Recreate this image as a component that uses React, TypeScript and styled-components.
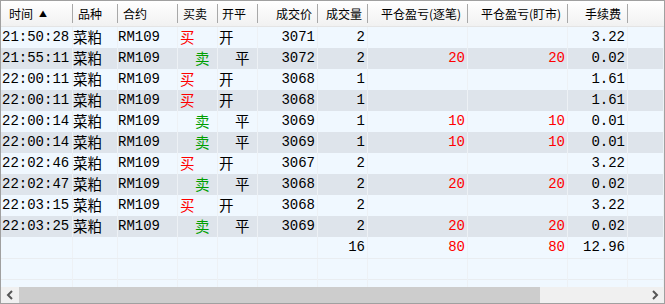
import React from "react";
import styled, { createGlobalStyle } from "styled-components";

const Global = createGlobalStyle`
  html, body { margin: 0; padding: 0; background: #fff; }
  body { width: 665px; height: 304px; overflow: hidden; }
`;

const COLS = "72px 45px 60px 40px 40px 60px 50px 100px 100px 60px 36px";

const Frame = styled.div`
  width: 665px;
  height: 304px;
  box-sizing: border-box;
  border: 1px solid #a0a0a0;
  background: #f0f8ff;
  display: flex;
  flex-direction: column;
  overflow: hidden;
`;

const HeaderRow = styled.div`
  display: grid;
  grid-template-columns: ${COLS};
  height: 25px;
  flex: none;
  background: linear-gradient(#ffffff, #f1f1f1);
  border-bottom: 1px solid #e4e4e4;
  font-family: "Noto Sans CJK SC", "Noto Sans", sans-serif;
  font-size: 12px;
  color: #000;
`;

const HeadCell = styled.div<{ $right?: boolean; $pad?: number }>`
  position: relative;
  display: flex;
  align-items: center;
  justify-content: ${(p) => (p.$right ? "flex-end" : "flex-start")};
  padding: ${(p) => (p.$right ? `0 ${p.$pad ?? 6}px 0 0` : `0 0 0 ${p.$pad ?? 6}px`)};
  white-space: nowrap;
  &::after {
    content: "";
    position: absolute;
    right: 0;
    top: 3px;
    bottom: 3px;
    width: 1px;
    background: #a8a8a8;
  }
`;

const HeadFill = styled.div``;

const Arrow = styled.span`
  font-size: 8px;
  margin-left: 6px;
  margin-top: -1px;
`;

const Body = styled.div`
  flex: 1;
  overflow: hidden;
`;

const Row = styled.div<{ $alt?: boolean }>`
  display: grid;
  grid-template-columns: ${COLS};
  height: 21px;
  background: ${(p) => (p.$alt ? "#dee4eb" : "#f0f8ff")};
  font-family: "Liberation Mono", "Noto Sans CJK SC", monospace;
  font-size: 14px;
  line-height: 21px;
  color: #000;
`;

const EmptyRow = styled(Row)`
  box-sizing: border-box;
  border-top: 1px solid #e9edf1;
`;

const Cell = styled.div<{ $right?: boolean; $pad?: number; $color?: string }>`
  box-sizing: border-box;
  height: 21px;
  line-height: 21px;
  border-right: 1px solid #edf1f5;
  text-align: ${(p) => (p.$right ? "right" : "left")};
  padding: ${(p) => (p.$right ? `0 ${p.$pad ?? 2}px 0 0` : `0 0 0 ${p.$pad ?? 1}px`)};
  color: ${(p) => p.$color ?? "#000"};
  white-space: nowrap;
  overflow: hidden;
`;

const CJK = styled.span`
  display: inline-block;
  vertical-align: top;
  height: 21px;
  line-height: 20px;
  font-family: "Noto Sans CJK SC", sans-serif;
  font-size: 14.5px;
`;

const Scrollbar = styled.div`
  flex: none;
  height: 16px;
  display: flex;
  background: #f0f0f0;
`;

const ScrollBtn = styled.div`
  width: 18px;
  display: flex;
  align-items: center;
  justify-content: center;
  flex: none;
`;

const Track = styled.div`
  flex: 1;
  display: flex;
`;

const Thumb = styled.div`
  width: 521px;
  background: #cdcdcd;
`;

type Trade = {
  t: string;
  side: "买" | "卖";
  oc: "开" | "平";
  price: number;
  qty: number;
  p1?: number;
  p2?: number;
  fee: string;
};

const trades: Trade[] = [
  { t: "21:50:28", side: "买", oc: "开", price: 3071, qty: 2, fee: "3.22" },
  { t: "21:55:11", side: "卖", oc: "平", price: 3072, qty: 2, p1: 20, p2: 20, fee: "0.02" },
  { t: "22:00:11", side: "买", oc: "开", price: 3068, qty: 1, fee: "1.61" },
  { t: "22:00:11", side: "买", oc: "开", price: 3068, qty: 1, fee: "1.61" },
  { t: "22:00:14", side: "卖", oc: "平", price: 3069, qty: 1, p1: 10, p2: 10, fee: "0.01" },
  { t: "22:00:14", side: "卖", oc: "平", price: 3069, qty: 1, p1: 10, p2: 10, fee: "0.01" },
  { t: "22:02:46", side: "买", oc: "开", price: 3067, qty: 2, fee: "3.22" },
  { t: "22:02:47", side: "卖", oc: "平", price: 3068, qty: 2, p1: 20, p2: 20, fee: "0.02" },
  { t: "22:03:15", side: "买", oc: "开", price: 3068, qty: 2, fee: "3.22" },
  { t: "22:03:25", side: "卖", oc: "平", price: 3069, qty: 2, p1: 20, p2: 20, fee: "0.02" },
];

const RED = "#ff0000";
const GREEN = "#009e00";

const headers: { label: string; right?: boolean; pad?: number; arrow?: boolean }[] = [
  { label: "时间", pad: 8, arrow: true },
  { label: "品种", pad: 5 },
  { label: "合约", pad: 5 },
  { label: "买卖", pad: 5 },
  { label: "开平", pad: 4 },
  { label: "成交价", right: true, pad: 6 },
  { label: "成交量", right: true, pad: 6 },
  { label: "平仓盈亏(逐笔)", right: true, pad: 7 },
  { label: "平仓盈亏(盯市)", right: true, pad: 7 },
  { label: "手续费", right: true, pad: 7 },
];

export default function App() {
  return (
    <>
      <Global />
      <Frame>
        <HeaderRow>
          {headers.map((h) => (
            <HeadCell key={h.label} $right={h.right} $pad={h.pad}>
              {h.label}
              {h.arrow && <Arrow>▲</Arrow>}
            </HeadCell>
          ))}
          <HeadFill />
        </HeaderRow>
        <Body>
          {trades.map((r, i) => (
            <Row key={i} $alt={i % 2 === 1}>
              <Cell $pad={1}>{r.t}</Cell>
              <Cell $pad={0}>
                <CJK>菜粕</CJK>
              </Cell>
              <Cell $pad={0}>RM109</Cell>
              <Cell $pad={r.side === "买" ? 2 : 17} $color={r.side === "买" ? RED : GREEN}>
                <CJK>{r.side}</CJK>
              </Cell>
              <Cell $pad={r.oc === "开" ? 1 : 17}>
                <CJK>{r.oc}</CJK>
              </Cell>
              <Cell $right>{r.price}</Cell>
              <Cell $right>{r.qty}</Cell>
              <Cell $right $color={RED}>{r.p1 ?? ""}</Cell>
              <Cell $right $color={RED}>{r.p2 ?? ""}</Cell>
              <Cell $right>{r.fee}</Cell>
              <Cell />
            </Row>
          ))}
          <Row>
            <Cell />
            <Cell />
            <Cell />
            <Cell />
            <Cell />
            <Cell />
            <Cell $right>16</Cell>
            <Cell $right $color={RED}>80</Cell>
            <Cell $right $color={RED}>80</Cell>
            <Cell $right>12.96</Cell>
            <Cell />
          </Row>
          {[0, 1].map((k) => (
            <EmptyRow key={k}>
              {Array.from({ length: 11 }).map((_, j) => (
                <Cell key={j} />
              ))}
            </EmptyRow>
          ))}
        </Body>
        <Scrollbar>
          <ScrollBtn>
            <svg width="8" height="10" viewBox="0 0 8 10">
              <path d="M6 1 L2 5 L6 9" fill="none" stroke="#555" strokeWidth="2" />
            </svg>
          </ScrollBtn>
          <Track>
            <Thumb />
          </Track>
          <ScrollBtn>
            <svg width="8" height="10" viewBox="0 0 8 10">
              <path d="M2 1 L6 5 L2 9" fill="none" stroke="#555" strokeWidth="2" />
            </svg>
          </ScrollBtn>
        </Scrollbar>
      </Frame>
    </>
  );
}
